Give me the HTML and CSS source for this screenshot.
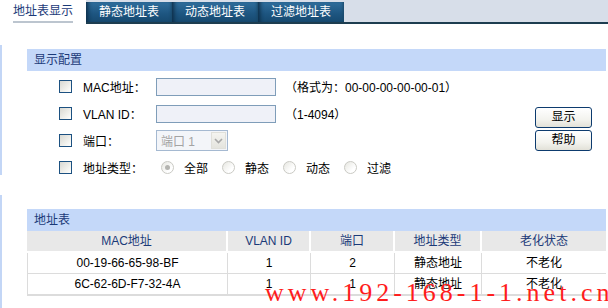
FILE: index.html
```html
<!DOCTYPE html>
<html>
<head>
<meta charset="utf-8">
<link rel="stylesheet" href="styles.css">
</head>
<body>
<div class="topbar">
  <div class="tab active"><span class="tab-label">地址表显示</span></div>
  <div class="tab">静态地址表</div>
  <div class="tab">动态地址表</div>
  <div class="tab">过滤地址表</div>
</div>

<div class="sec sec1">
  <div class="panel">
    <div class="phead">显示配置</div>
    <div class="form">
      <div class="rows">
        <div class="row">
          <span class="cb"></span><span class="lbl">MAC地址：</span><span class="inp"></span><span class="hint">（格式为：00-00-00-00-00-01）</span>
        </div>
        <div class="row">
          <span class="cb"></span><span class="lbl">VLAN ID：</span><span class="inp"></span><span class="hint">（1-4094）</span>
        </div>
        <div class="row">
          <span class="cb"></span><span class="lbl">端口：</span>
          <span class="sel"><span class="sel-text">端口 1</span><span class="sel-btn"><svg width="9" height="6" viewBox="0 0 9 6"><path d="M1 1 L4.5 4.5 L8 1" fill="none" stroke="#a8a8a8" stroke-width="1.6"/></svg></span></span>
        </div>
        <div class="row">
          <span class="cb"></span><span class="lbl">地址类型：</span>
          <span class="radios">
            <span class="ropt"><span class="rb on"></span>全部</span>
            <span class="ropt"><span class="rb"></span>静态</span>
            <span class="ropt"><span class="rb"></span>动态</span>
            <span class="ropt"><span class="rb"></span>过滤</span>
          </span>
        </div>
      </div>
      <div class="btns">
        <button class="btn">显示</button>
        <button class="btn">帮助</button>
      </div>
    </div>
  </div>
</div>

<div class="sec sec2">
  <div class="panel">
    <div class="phead">地址表</div>
    <table class="tbl">
      <colgroup><col class="c1"><col class="c2"><col class="c3"><col class="c4"><col class="c5"></colgroup>
      <thead>
        <tr><th>MAC地址</th><th>VLAN ID</th><th>端口</th><th>地址类型</th><th>老化状态</th></tr>
      </thead>
      <tbody>
        <tr><td>00-19-66-65-98-BF</td><td>1</td><td>2</td><td>静态地址</td><td>不老化</td></tr>
        <tr><td>6C-62-6D-F7-32-4A</td><td>1</td><td>1</td><td>静态地址</td><td>不老化</td></tr>
      </tbody>
    </table>
  </div>
</div>

<div class="watermark">www.192-168-1-1.net.cn</div>
</body>
</html>
```

FILE: styles.css
```css
* { box-sizing: border-box; }
html, body { margin: 0; padding: 0; }
body {
  width: 608px;
  height: 308px;
  overflow: hidden;
  position: relative;
  background: #fff;
  font-family: "Liberation Sans", "Noto Sans CJK SC", sans-serif;
  font-size: 12px;
  color: #000;
}

.topbar {
  display: flex;
  height: 24px;
  background: #d7dee9;
  border-bottom: 2px solid #1d3d50;
}
.tab {
  width: 86px;
  height: 20px;
  margin-top: 2px;
  color: #fff;
  font-size: 12px;
  line-height: 20px;
  text-align: center;
  background: linear-gradient(to bottom, #2f6e9c, #1d5580 60%, #174a70);
  box-shadow: inset 5px 0 4px -3px #0c2c46, inset -3px 0 3px -2px #1a4868;
}
.tab.active {
  width: 86px;
  height: 24px;
  margin-top: 0;
  margin-bottom: -2px;
  background: #fff;
  box-shadow: none;
  color: #1b3a78;
  line-height: 22px;
  padding-top: 0;
}
.tab-label {
  display: inline-block;
  height: 23px;
  border-bottom: 2px solid #bcc5cf;
}

.sec {
  border-left: 2px solid #c3d6f6;
  padding-left: 25px;
  padding-right: 2px;
}
.sec1 {
  margin-top: 21px;
  height: 130px;
  padding-top: 4px;
}
.sec2 {
  margin-top: 20px;
  height: 113px;
  padding-top: 14px;
}

.phead {
  height: 22px;
  line-height: 22px;
  background: #c4d8f9;
  color: #1b3a78;
  padding-left: 7px;
}

.form {
  display: flex;
  justify-content: space-between;
  padding-top: 2px;
}
.rows { display: flex; flex-direction: column; }
.row {
  display: flex;
  align-items: center;
  height: 27px;
  padding-left: 32px;
}
.cb {
  width: 13px;
  height: 13px;
  border: 1px solid #1c5181;
  background: linear-gradient(135deg, #d8d8d2, #f4f4f0 70%, #fff);
  margin-right: 11px;
  flex: none;
}
.lbl {
  width: 73px;
  flex: none;
  white-space: nowrap;
}
.inp {
  width: 120px;
  height: 18px;
  border: 1px solid #7f9db9;
  background: #eff1f8;
  flex: none;
}
.hint {
  margin-left: 9px;
  white-space: nowrap;
}
.sel {
  position: relative;
  display: flex;
  align-items: center;
  width: 72px;
  height: 21px;
  border: 1px solid #a5b9d1;
  background: #f3f5f9;
  color: #a3a3a3;
  padding-left: 4px;
}
.sel-text { flex: 1; }
.sel-btn {
  display: flex;
  align-items: center;
  justify-content: center;
  width: 15px;
  height: 17px;
  margin-right: 1px;
  background: linear-gradient(to bottom, #f4f4f0, #e4e4de);
  border: 1px solid #e0e0da;
}

.radios {
  display: flex;
  margin-left: 5px;
}
.ropt {
  display: flex;
  align-items: center;
  width: 61px;
}
.rb {
  width: 13px;
  height: 13px;
  border-radius: 50%;
  border: 1px solid #cacac4;
  background: linear-gradient(135deg, #e6e6e0, #fff 70%);
  margin-right: 10px;
  display: flex;
  align-items: center;
  justify-content: center;
  flex: none;
}
.rb.on::after {
  content: "";
  width: 5px;
  height: 5px;
  border-radius: 50%;
  background: #b4b4b0;
}

.btns {
  display: flex;
  flex-direction: column;
  gap: 2px;
  padding-top: 34px;
  margin-right: 14px;
}
.btn {
  width: 57px;
  height: 21px;
  padding: 0;
  border: 1px solid #0d3b6e;
  border-radius: 3px;
  background: linear-gradient(to bottom, #ffffff, #f3f3ee 60%, #e2e1d8);
  font-family: "Liberation Sans", "Noto Sans CJK SC", sans-serif;
  font-size: 12px;
  color: #000;
  line-height: 19px;
}

.tbl {
  width: 579px;
  table-layout: fixed;
  border-collapse: separate;
  border-spacing: 0;
}
.c1 { width: 201px; }
.c2 { width: 83px; }
.c3 { width: 84px; }
.c4 { width: 87px; }
.c5 { width: 124px; }
.tbl th {
  height: 22px;
  padding: 0;
  font-weight: normal;
  color: #1b3a78;
  background: #e8e8e8;
  border-right: 2px solid #fff;
  border-bottom: 2px solid #fff;
  text-align: center;
  line-height: 20px;
}
.tbl th:last-child { border-right: none; }
.tbl td {
  height: 21px;
  padding: 0;
  text-align: center;
  line-height: 20px;
  border-right: 1px solid #dcdcdc;
  border-bottom: 1px solid #dcdcdc;
}
.tbl td:first-child { border-left: 1px solid #dcdcdc; }
.tbl td:last-child { border-right: none; }
.tbl tr:last-child td { border-bottom: 2px solid #dcdcdc; }

.watermark {
  position: absolute;
  left: 265px;
  top: 280px;
  font-family: "Liberation Serif", serif;
  font-size: 26px;
  line-height: 26px;
  letter-spacing: 4px;
  color: #ff1c1c;
  white-space: nowrap;
}
```
